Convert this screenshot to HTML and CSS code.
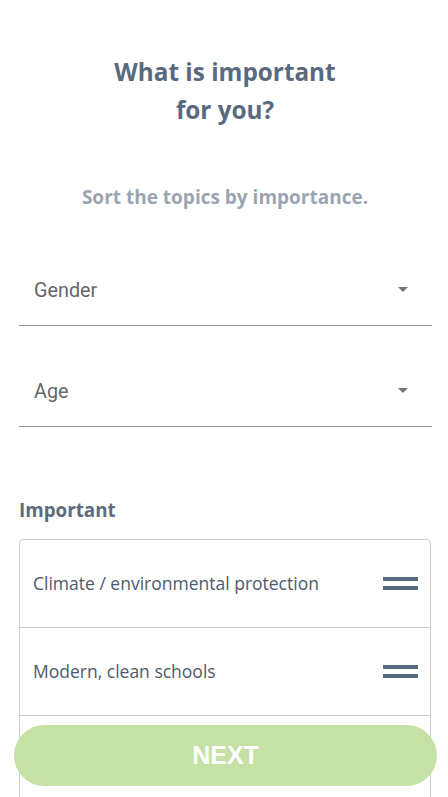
FILE: index.html
```html
<!DOCTYPE html>
<html lang="en">
<head>
<meta charset="utf-8">
<title>What is important for you?</title>
<link rel="stylesheet" href="styles.css">
</head>
<body>
<main class="page">
  <h1 class="title">What is important<br>for you?</h1>
  <p class="subtitle">Sort the topics by importance.</p>

  <div class="field">
    <span class="field-label">Gender</span>
    <svg class="arrow" width="10" height="5" viewBox="0 0 10 5"><path d="M0 0h10L5 5z" fill="#757575"/></svg>
  </div>
  <div class="field">
    <span class="field-label">Age</span>
    <svg class="arrow" width="10" height="5" viewBox="0 0 10 5"><path d="M0 0h10L5 5z" fill="#757575"/></svg>
  </div>

  <h2 class="section-label">Important</h2>
  <ul class="topic-list">
    <li class="topic">
      <span class="topic-text">Climate / environmental protection</span>
      <span class="handle"><span class="bar"></span><span class="bar"></span></span>
    </li>
    <li class="topic">
      <span class="topic-text">Modern, clean schools</span>
      <span class="handle"><span class="bar"></span><span class="bar"></span></span>
    </li>
    <li class="topic">
      <span class="topic-text">Affordable housing</span>
      <span class="handle"><span class="bar"></span><span class="bar"></span></span>
    </li>
  </ul>
</main>
<button class="next-btn" type="button">NEXT</button>
</body>
</html>
```
FILE: styles.css
```css
html, body {
  margin: 0;
  padding: 0;
  background: #ffffff;
}
body {
  font-family: "Open Sans", "Noto Sans", sans-serif;
  overflow: hidden;
  height: 797px;
}
.page {
  padding: 53px 17px 0 19px;
}
.title {
  margin: 0;
  text-align: center;
  font-size: 24.3px;
  line-height: 38px;
  font-weight: 700;
  color: #5a6a7e;
}
.subtitle {
  margin: 56px 0 0;
  text-align: center;
  font-size: 19px;
  line-height: 24px;
  font-weight: 700;
  color: #9ba5b0;
}
.field {
  display: flex;
  align-items: center;
  justify-content: space-between;
  height: 68px;
  padding: 0 24px 0 15px;
  margin-right: -1px;
  border-bottom: 1px solid #949494;
  font-family: Roboto, "Liberation Sans", sans-serif;
}
.field:first-of-type {
  margin-top: 48px;
}
.field + .field {
  margin-top: 32px;
}
.field-label {
  font-size: 19.8px;
  color: #666666;
  margin-top: -1px;
}
.arrow {
  display: block;
  margin-top: -3px;
}
.section-label {
  margin: 71px 0 0;
  font-size: 18.8px;
  line-height: 24px;
  font-weight: 700;
  color: #5c6b7d;
}
.topic-list {
  list-style: none;
  margin: 17px 0 0;
  padding: 0;
  border: 1px solid #cccccc;
  border-radius: 4px;
}
.topic {
  display: flex;
  align-items: center;
  justify-content: space-between;
  height: 87px;
  padding: 0 12px 0 13px;
  border-bottom: 1px solid #cccccc;
}
.topic-text {
  font-size: 17.5px;
  font-weight: 500;
  color: #4b5a6d;
  margin-top: -1px;
}
.handle {
  display: flex;
  flex-direction: column;
  gap: 5px;
  width: 35px;
}
.bar {
  display: block;
  height: 4px;
  background: #5a6b80;
}
.next-btn {
  position: fixed;
  left: 14px;
  right: 11px;
  bottom: 11px;
  height: 61px;
  border: none;
  border-radius: 31px;
  background: #c5e1a5;
  color: #ffffff;
  font-family: "Liberation Sans", Arial, sans-serif;
  font-weight: 700;
  font-size: 25px;
  padding: 0;
}
```
